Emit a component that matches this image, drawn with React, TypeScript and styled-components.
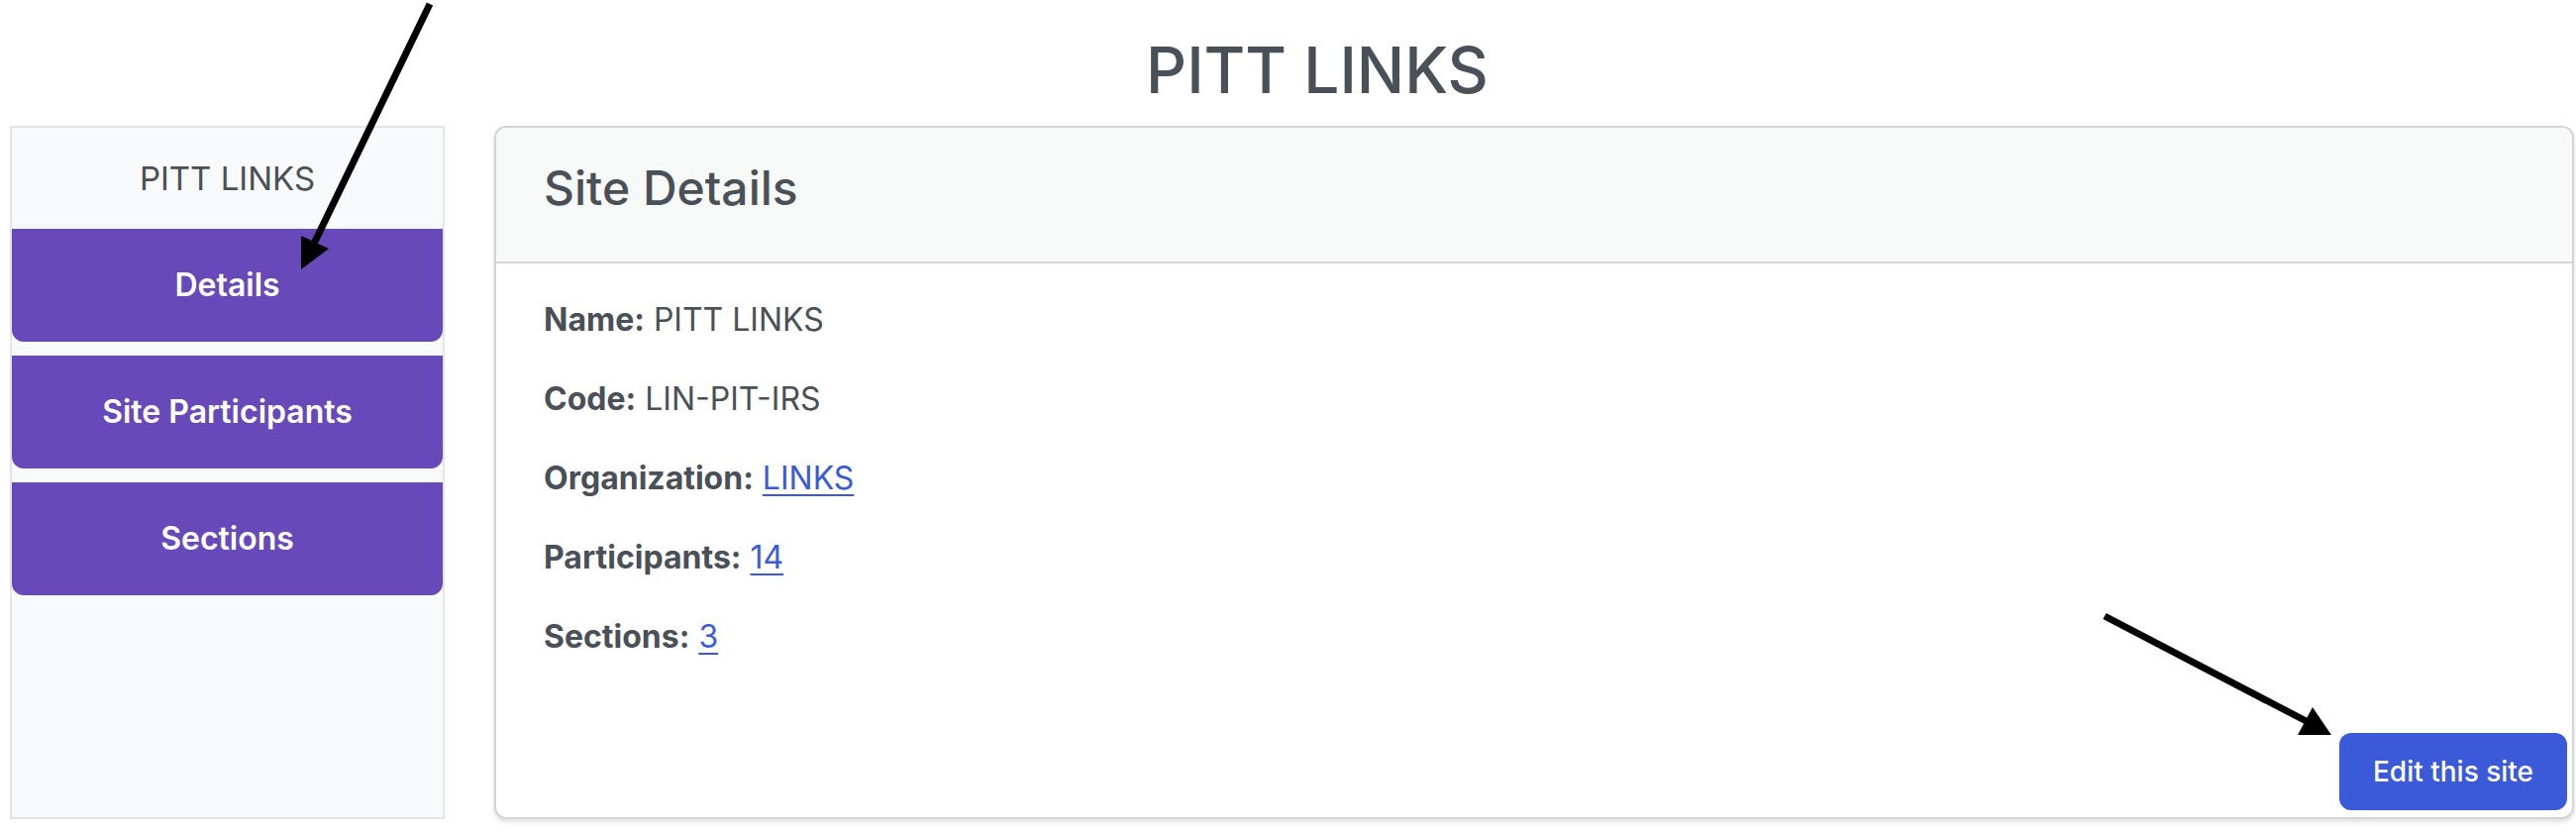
import React from 'react';
import styled, { createGlobalStyle } from 'styled-components';

const GlobalStyle = createGlobalStyle`
  html, body {
    margin: 0;
    padding: 0;
    background: #ffffff;
    overflow: hidden;
  }
  body {
    font-family: Inter, "Noto Sans", "Liberation Sans", sans-serif;
    color: #495057;
  }
`;

const Page = styled.div`
  position: relative;
  width: 2601px;
  height: 839px;
`;

const PageTitle = styled.h1`
  margin: 0 0 17px;
  padding: 33px 0 0 59px;
  font-size: 64px;
  line-height: 1.2;
  font-weight: 500;
  text-align: center;
  color: #495057;
`;

const Layout = styled.div`
  display: flex;
  align-items: stretch;
  gap: 50px;
  padding-left: 10px;
  height: 700px;
`;

const Sidebar = styled.aside`
  width: 439px;
  box-sizing: border-box;
  border: 2px solid #e2e4e7;
  background: #f8f9fa;
  display: flex;
  flex-direction: column;
  gap: 14px;
`;

const SidebarTitle = styled.div`
  height: 102px;
  flex-shrink: 0;
  display: flex;
  align-items: center;
  justify-content: center;
  font-size: 33px;
  font-weight: 400;
  color: #495057;
  margin-bottom: -14px;
`;

const NavButton = styled.button`
  height: 114px;
  flex-shrink: 0;
  width: 100%;
  border: none;
  border-radius: 0 0 12px 12px;
  background: #6849b9;
  color: #ffffff;
  font-family: inherit;
  font-size: 32px;
  font-weight: 600;
  cursor: pointer;
`;

const Card = styled.section`
  width: 2100px;
  box-sizing: border-box;
  border: 2px solid #d3d4d6;
  border-radius: 12px;
  background: #ffffff;
  box-shadow: 0 3px 5px rgba(0, 0, 0, 0.12);
  display: flex;
  flex-direction: column;
  overflow: hidden;
`;

const CardHeader = styled.header`
  background: #f7f8f8;
  border-bottom: 2px solid #d3d4d6;
  padding: 32px 48px 46px;
`;

const CardTitle = styled.h3`
  margin: 0;
  font-size: 48px;
  line-height: 1.2;
  font-weight: 500;
  color: #495057;
`;

const CardBody = styled.div`
  flex: 1;
  padding: 33px 48px 0;
`;

const Field = styled.p`
  margin: 0 0 32px;
  font-size: 32px;
  line-height: 48px;
  color: #495057;
`;

const Label = styled.b`
  font-weight: 700;
`;

const ValueLink = styled.a`
  color: #3a5ad9;
  text-decoration: underline;
  text-underline-offset: 5px;
  text-decoration-thickness: 2px;
`;

const CardFooter = styled.div`
  display: flex;
  justify-content: flex-end;
  padding: 0 5px 7px 0;
`;

const EditButton = styled.button`
  width: 230px;
  height: 78px;
  border: none;
  border-radius: 12px;
  background: #3a5ad9;
  color: #ffffff;
  font-family: inherit;
  font-size: 28px;
  font-weight: 500;
  cursor: pointer;
`;

const Annotations = styled.svg`
  position: absolute;
  top: 0;
  left: 0;
  pointer-events: none;
`;

const navItems = ['Details', 'Site Participants', 'Sections'];

export default function App() {
  return (
    <Page>
      <GlobalStyle />
      <PageTitle>PITT LINKS</PageTitle>
      <Layout>
        <Sidebar>
          <SidebarTitle>PITT LINKS</SidebarTitle>
          {navItems.map((item) => (
            <NavButton key={item}>{item}</NavButton>
          ))}
        </Sidebar>
        <Card>
          <CardHeader>
            <CardTitle>Site Details</CardTitle>
          </CardHeader>
          <CardBody>
            <Field>
              <Label>Name:</Label> PITT LINKS
            </Field>
            <Field>
              <Label>Code:</Label> LIN-PIT-IRS
            </Field>
            <Field>
              <Label>Organization:</Label> <ValueLink href="#">LINKS</ValueLink>
            </Field>
            <Field>
              <Label>Participants:</Label> <ValueLink href="#">14</ValueLink>
            </Field>
            <Field>
              <Label>Sections:</Label> <ValueLink href="#">3</ValueLink>
            </Field>
          </CardBody>
          <CardFooter>
            <EditButton>Edit this site</EditButton>
          </CardFooter>
        </Card>
      </Layout>
      <Annotations width="2601" height="839" viewBox="0 0 2601 839">
        <line x1="434" y1="4" x2="316" y2="248" stroke="#000" strokeWidth="7" />
        <polygon points="304,272 304,238 332,251" fill="#000" />
        <line x1="2125" y1="622" x2="2338" y2="733" stroke="#000" strokeWidth="7" />
        <polygon points="2335,714 2354,742 2320,742" fill="#000" />
      </Annotations>
    </Page>
  );
}
